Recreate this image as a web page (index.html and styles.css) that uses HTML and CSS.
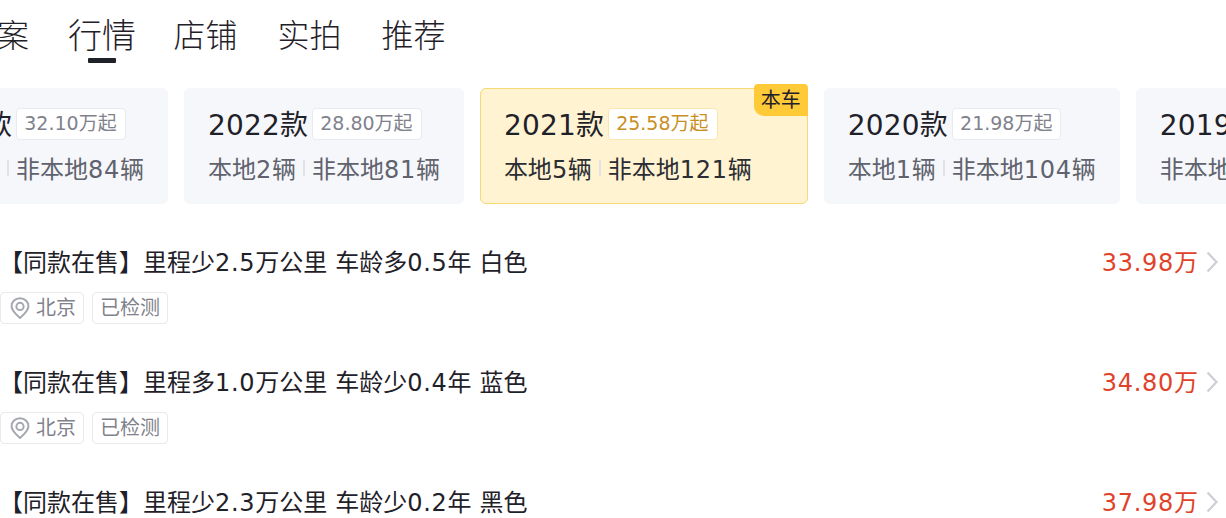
FILE: index.html
```html
<!DOCTYPE html>
<html lang="zh-CN">
<head>
  <meta charset="UTF-8" />
  <title>行情</title>
  <link rel="stylesheet" href="styles.css">
</head>
<body>
  <div class="tabs">
    <div class="tab">档案</div>
    <div class="tab active">行情</div>
    <div class="tab">店铺</div>
    <div class="tab">实拍</div>
    <div class="tab">推荐</div>
  </div>

  <div class="cards">
    <div class="card">
      <div class="card-top"><span class="year">2023款</span><span class="chip">32.10万起</span></div>
      <div class="card-bottom"><span>本地<span class="num">3</span>辆</span><i class="sep"></i><span>非本地<span class="num">84</span>辆</span></div>
    </div>
    <div class="card">
      <div class="card-top"><span class="year">2022款</span><span class="chip">28.80万起</span></div>
      <div class="card-bottom"><span>本地<span class="num">2</span>辆</span><i class="sep"></i><span>非本地<span class="num">81</span>辆</span></div>
    </div>
    <div class="card current">
      <div class="badge">本车</div>
      <div class="card-top"><span class="year">2021款</span><span class="chip">25.58万起</span></div>
      <div class="card-bottom"><span>本地<span class="num">5</span>辆</span><i class="sep"></i><span>非本地<span class="num">121</span>辆</span></div>
    </div>
    <div class="card">
      <div class="card-top"><span class="year">2020款</span><span class="chip">21.98万起</span></div>
      <div class="card-bottom"><span>本地<span class="num">1</span>辆</span><i class="sep"></i><span>非本地<span class="num">104</span>辆</span></div>
    </div>
    <div class="card">
      <div class="card-top"><span class="year">2019款</span><span class="chip">18.98万起</span></div>
      <div class="card-bottom"><span>非本地<span class="num">96</span>辆</span></div>
    </div>
  </div>

  <div class="list">
    <div class="row">
      <div class="row-main">
        <div class="row-title">【同款在售】里程少<span class="num">2.5</span>万公里 车龄多<span class="num">0.5</span>年 白色</div>
        <div class="row-price"><span class="num">33.98</span>万</div>
        <svg class="arrow" viewBox="0 0 12 22"><path d="M1.5 1.5 10.5 11 1.5 20.5" /></svg>
      </div>
      <div class="tags">
        <span class="tag"><svg class="pin" viewBox="0 0 20 22"><path d="M10 1.2C5.2 1.2 1.6 4.8 1.6 9.3c0 3.2 2.2 5.6 4.4 7.8L10 21l4-3.9c2.2-2.2 4.4-4.6 4.4-7.8 0-4.5-3.6-8.1-8.4-8.1Z" /><circle cx="10" cy="9.4" r="3.6" /></svg>北京</span>
        <span class="tag">已检测</span>
      </div>
    </div>
    <div class="row">
      <div class="row-main">
        <div class="row-title">【同款在售】里程多<span class="num">1.0</span>万公里 车龄少<span class="num">0.4</span>年 蓝色</div>
        <div class="row-price"><span class="num">34.80</span>万</div>
        <svg class="arrow" viewBox="0 0 12 22"><path d="M1.5 1.5 10.5 11 1.5 20.5" /></svg>
      </div>
      <div class="tags">
        <span class="tag"><svg class="pin" viewBox="0 0 20 22"><path d="M10 1.2C5.2 1.2 1.6 4.8 1.6 9.3c0 3.2 2.2 5.6 4.4 7.8L10 21l4-3.9c2.2-2.2 4.4-4.6 4.4-7.8 0-4.5-3.6-8.1-8.4-8.1Z" /><circle cx="10" cy="9.4" r="3.6" /></svg>北京</span>
        <span class="tag">已检测</span>
      </div>
    </div>
    <div class="row">
      <div class="row-main">
        <div class="row-title">【同款在售】里程少<span class="num">2.3</span>万公里 车龄少<span class="num">0.2</span>年 黑色</div>
        <div class="row-price"><span class="num">37.98</span>万</div>
        <svg class="arrow" viewBox="0 0 12 22"><path d="M1.5 1.5 10.5 11 1.5 20.5" /></svg>
      </div>
    </div>
  </div>
</body>
</html>
```

FILE: styles.css
```css
html, body {
  margin: 0;
  height: 518px;
  overflow: hidden;
}

body {
  background-color: #fff;
  color: #1f2129;
  font-family: "DejaVu Sans", "Noto Sans CJK SC", sans-serif;
}

.num {
  letter-spacing: .7px;
}

.tabs {
  display: flex;
  align-items: center;
  gap: 40px;
  height: 66px;
  margin-left: -35px;
  font-size: 32px;
  font-weight: 300;
  color: #1f2129;
}

.tab {
  position: relative;
  white-space: nowrap;
}

.tab.active {
  font-size: 34px;
  margin-left: -1px;
  margin-right: -2.5px;
}

.tab.active::after {
  content: "";
  position: absolute;
  left: 20px;
  bottom: -5px;
  width: 28px;
  height: 5px;
  border-radius: 1px;
  background-color: #1f2129;
}

.cards {
  display: flex;
  gap: 16px;
  margin-top: 22px;
  margin-left: -112px;
  width: 1500px;
}

.card {
  position: relative;
  box-sizing: border-box;
  height: 116px;
  padding: 16px 23px 0;
  background-color: #f6f7fb;
  border: 1px solid #f6f7fb;
  border-radius: 6px;
  white-space: nowrap;
}

.card.current {
  padding-right: 55px;
  background-color: #fff3d1;
  border-color: #f7d873;
}

.card-top {
  display: flex;
  align-items: center;
  gap: 4px;
  height: 36px;
}

.year {
  font-size: 28px;
  letter-spacing: .2px;
}

.chip {
  box-sizing: border-box;
  height: 32px;
  margin-top: 2px;
  line-height: 29px;
  padding: 0 8px 0 7px;
  font-size: 19px;
  color: #7f828c;
  background-color: #fff;
  border: 1px solid #e9eaef;
  border-radius: 4px;
}

.current .chip {
  color: #c98f1f;
  border-color: #fae7b0;
}

.card-bottom {
  display: flex;
  align-items: center;
  margin-top: 9px;
  font-size: 24px;
  color: #60636d;
}

.current .card-bottom {
  color: #2b2d33;
}

.sep {
  width: 2px;
  height: 16px;
  margin: 0 7px;
  background-color: #e2e3e8;
}

.badge {
  position: absolute;
  top: -5px;
  right: -1px;
  width: 54px;
  height: 32px;
  line-height: 32px;
  text-align: center;
  font-size: 20px;
  background-color: #ffca38;
  border-radius: 4px 4px 0 10px;
}

.list {
  margin-top: 34px;
}

.row {
  height: 120px;
}

.row-main {
  display: flex;
  align-items: center;
  height: 44px;
  padding-right: 8px;
  font-size: 24px;
}

.row-title {
  flex: 1;
  margin-left: -1px;
  white-space: nowrap;
  word-spacing: .4px;
  color: #1f2129;
}

.row-price {
  color: #e0432b;
}

.arrow {
  width: 12px;
  height: 22px;
  margin-top: 3px;
  margin-left: 8px;
  fill: none;
  stroke: #cdcfd4;
  stroke-width: 2.2;
}

.tags {
  display: flex;
  gap: 8px;
  margin-top: 10px;
}

.tag {
  box-sizing: border-box;
  display: flex;
  align-items: center;
  height: 32px;
  padding: 0 7px 3px;
  font-size: 20px;
  color: #7f828c;
  border: 1px solid #e9eaef;
  border-radius: 4px;
}

.pin {
  width: 20px;
  height: 22px;
  margin: 3px 6px 0 2px;
  fill: none;
  stroke: #a5a8b1;
  stroke-width: 2;
}
```
